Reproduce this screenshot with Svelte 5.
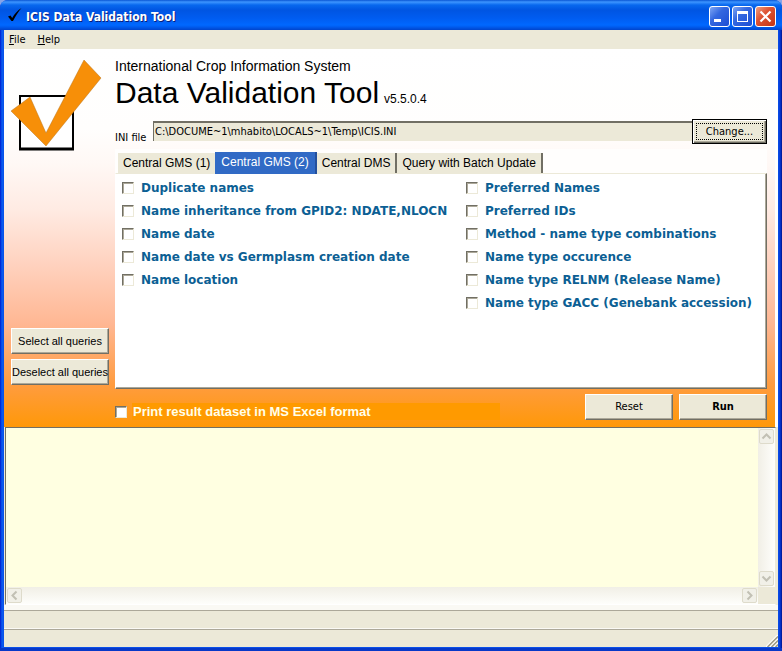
<script>
  const tabs = ['Central GMS (1)', 'Central GMS (2)', 'Central DMS', 'Query with Batch Update'];
  let active = $state(1);
  let iniPath = $state('C:\\DOCUME~1\\mhabito\\LOCALS~1\\Temp\\ICIS.INI');
  let excel = $state(false);
  let columns = $state(
    [
      [
        'Duplicate names',
        'Name inheritance from GPID2: NDATE,NLOCN',
        'Name date',
        'Name date vs Germplasm creation date',
        'Name location'
      ],
      [
        'Preferred Names',
        'Preferred IDs',
        'Method - name type combinations',
        'Name type occurence',
        'Name type RELNM (Release Name)',
        'Name type GACC (Genebank accession)'
      ]
    ].map((column) => column.map((label) => ({ label, checked: false })))
  );

  function setAll(value) {
    for (const column of columns) for (const query of column) query.checked = value;
  }
</script>

<div class="window">
  <header class="titlebar">
    <svg class="app-icon" viewBox="0 0 16 16" aria-hidden="true">
      <path d="M1 9.5 L3.5 8.5 L5.2 11 C7.5 7 10.5 3.5 14.5 1 C11 5 8.5 9 6 14 L4.5 14 Z" fill="#000" />
    </svg>
    <h1>ICIS Data Validation Tool</h1>
    <div class="controls">
      <button class="ctl" aria-label="Minimize">
        <svg viewBox="0 0 19 19"><path d="M4 12h7v3H4z" fill="#fff" /></svg>
      </button>
      <button class="ctl" aria-label="Maximize">
        <svg viewBox="0 0 19 19"><path d="M4 4h11v11H4zM5 7v7h9V7z" fill="#fff" fill-rule="evenodd" /></svg>
      </button>
      <button class="ctl close" aria-label="Close">
        <svg viewBox="0 0 19 19"><path d="M4.5 4.5l10 10M14.5 4.5l-10 10" stroke="#fff" stroke-width="2.2" /></svg>
      </button>
    </div>
  </header>

  <div class="client">
    <nav class="menu">
      <button><u>F</u>ile</button>
      <button><u>H</u>elp</button>
    </nav>

    <main>
      <aside>
        <svg class="logo" viewBox="0 0 92 92" aria-hidden="true">
          <rect x="9" y="37" width="53" height="53" fill="#fff" stroke="#000" stroke-width="2" />
          <path d="M8 90h55" stroke="#000" stroke-width="3" />
          <path d="M0 52 L19 38 L35 74 L73 1 L90 19 L35 87 Z" fill="#f78f08" stroke="#b8741c" stroke-width=".5" />
        </svg>
        <div class="side-buttons">
          <button class="btn" onclick={() => setAll(true)}>Select all queries</button>
          <button class="btn" onclick={() => setAll(false)}>Deselect all queries</button>
        </div>
      </aside>

      <section class="work">
        <p class="system">International Crop Information System</p>
        <div class="product">
          <h2>Data Validation Tool</h2>
          <span>v5.5.0.4</span>
        </div>

        <div class="ini">
          <label for="ini">INI file</label>
          <input id="ini" type="text" readonly bind:value={iniPath} />
          <button class="btn default">Change...</button>
        </div>

        <div class="tabs" role="tablist">
          {#each tabs as tab, i}
            <button role="tab" class:active={active === i} aria-selected={active === i} onclick={() => (active = i)}>{tab}</button>
          {/each}
        </div>

        <div class="panel" role="tabpanel">
          {#each columns as column}
            <div class="queries">
              {#each column as query}
                <label><input type="checkbox" bind:checked={query.checked} />{query.label}</label>
              {/each}
            </div>
          {/each}
        </div>

        <div class="actions">
          <label class="excel"><input type="checkbox" bind:checked={excel} />Print result dataset in MS Excel format</label>
          <button class="btn" onclick={() => setAll(false)}>Reset</button>
          <button class="btn run">Run</button>
        </div>
      </section>
    </main>

    <section class="output">
      <textarea readonly aria-label="Results"></textarea>
      <div class="bar vertical">
        <button aria-label="Scroll up"><svg viewBox="0 0 13 13"><path d="M2.5 8.5l4-4 4 4" /></svg></button>
        <button aria-label="Scroll down"><svg viewBox="0 0 13 13"><path d="M2.5 4.5l4 4 4-4" /></svg></button>
      </div>
      <div class="bar horizontal">
        <button aria-label="Scroll left"><svg viewBox="0 0 13 13"><path d="M8.5 2.5l-4 4 4 4" /></svg></button>
        <button aria-label="Scroll right"><svg viewBox="0 0 13 13"><path d="M4.5 2.5l4 4-4 4" /></svg></button>
      </div>
      <div class="corner"></div>
    </section>

    <footer>
      <div class="status"></div>
      <div class="status">
        <svg class="grip" viewBox="0 0 12 12" aria-hidden="true">
          <path d="M0 12L12 0M4 12L12 4M8 12L12 8" stroke="#fff" stroke-width="1.5" />
          <path d="M1.5 12L12 1.5M5.5 12L12 5.5M9.5 12L12 9.5" stroke="#9c9882" stroke-width="1.5" />
        </svg>
      </div>
    </footer>
  </div>
</div>

<style>
  :global(body) {
    background: #86a4e8;
  }
  .window {
    box-sizing: border-box;
    min-height: 100vh;
    display: flex;
    flex-direction: column;
    padding: 0 4px 4px;
    border-radius: 8px 8px 0 0;
    background: linear-gradient(90deg, #0019cf 0, #0a5cf0 2px, #0a50e8 4px, #0a50e8 calc(100% - 4px), #0538d8 calc(100% - 2px), #00138c 100%);
    box-shadow: inset 0 -4px 0 -1px #0838c8;
    font: 11px/14px 'DejaVu Sans Condensed', 'DejaVu Sans', sans-serif;
    color: #000;
  }
  button,
  input,
  textarea {
    font: inherit;
    color: inherit;
    margin: 0;
    box-sizing: border-box;
  }
  .titlebar {
    height: 30px;
    margin: 0 -4px;
    padding: 0 6px 0 7px;
    box-sizing: border-box;
    display: flex;
    align-items: center;
    border-radius: 8px 8px 0 0;
    background: linear-gradient(#0a56d4 0, #3d95ff 2px, #0868ee 5px, #0055e2 10px, #005cf0 18px, #0068ff 25px, #005bee 27px, #0044cc 30px);
  }
  .app-icon {
    width: 16px;
    height: 16px;
  }
  h1 {
    flex: 1;
    margin: 4px 0 0 3px;
    font: bold 12px/16px 'DejaVu Sans Condensed', 'DejaVu Sans', sans-serif;
    color: #fff;
    text-shadow: 1px 1px 0 #0a1f7a;
  }
  .controls {
    display: flex;
    gap: 2px;
    padding-top: 3px;
  }
  .ctl {
    width: 21px;
    height: 21px;
    padding: 0;
    border: 1px solid #fff;
    border-radius: 3px;
    background: linear-gradient(135deg, #7fa6f4 0, #3468e0 40%, #1c4ed4 100%);
  }
  .ctl.close {
    background: linear-gradient(135deg, #f0a080 0, #de5434 40%, #c43414 100%);
  }
  .ctl svg {
    display: block;
    width: 19px;
    height: 19px;
    fill: none;
  }
  .client {
    flex: 1;
    display: flex;
    flex-direction: column;
    background: #ece9d8;
  }
  .menu {
    display: flex;
    gap: 12px;
    height: 19px;
    padding: 0 5px;
    background: #ece9d8;
  }
  .menu button {
    border: 0;
    padding: 0;
    background: none;
  }
  main {
    display: grid;
    grid-template-columns: 98px 1fr;
    column-gap: 6px;
    padding: 8px 8px 7px 7px;
    margin-right: 3px;
    box-shadow: 3px 0 0 #fff;
    background: linear-gradient(#fff 0, #fffefd 80px, #fff8f5 115px, #ffebe3 160px, #ffd2bf 215px, #ffb793 275px, #ff9c40 335px, #ff9808 100%);
  }
  aside {
    display: flex;
    flex-direction: column;
    justify-content: space-between;
  }
  .logo {
    width: 92px;
    height: 92px;
    margin-top: 2px;
    overflow: visible;
  }
  .side-buttons {
    display: flex;
    flex-direction: column;
    gap: 5px;
    padding-bottom: 35px;
    font: 11px/14px 'Liberation Sans', Arial, sans-serif;
  }
  .btn {
    height: 26px;
    padding: 0;
    white-space: nowrap;
    background: #ece9d8;
    border: 1px solid;
    border-color: #fff #716f64 #716f64 #fff;
    box-shadow: inset -1px -1px 0 #aca899;
  }
  .btn.default {
    width: 75px;
    height: 25px;
    border-color: #000;
    outline: 1px dotted #000;
    outline-offset: -5px;
    box-shadow: inset 1px 1px 0 #fff, inset -1px -1px 0 #716f64, inset -2px -2px 0 #aca899;
  }
  .system {
    margin: 0;
    font: 14px/18px 'Liberation Sans', Arial, sans-serif;
  }
  .product {
    display: flex;
    align-items: baseline;
    gap: 5px;
  }
  .product h2 {
    margin: 0;
    font: 30px/36px 'Liberation Sans', Arial, sans-serif;
  }
  .product span {
    font: 12px/14px 'Liberation Sans', Arial, sans-serif;
  }
  .ini {
    display: flex;
    align-items: flex-start;
    margin-top: 8px;
  }
  .ini label {
    width: 38px;
    padding-top: 12px;
    white-space: nowrap;
  }
  .ini input {
    flex: 1;
    min-width: 0;
    height: 20px;
    margin-top: 2px;
    padding: 0 1px 2px;
    background: #ece9d8;
    border: 0 solid #716f64;
    border-width: 2px 0 0 1px;
  }
  .tabs {
    display: flex;
    height: 24px;
    box-sizing: border-box;
    margin-top: 4px;
    padding: 4px 0 0 3px;
    align-items: flex-start;
    background: #fffefd;
  }
  .tabs button {
    height: 20px;
    padding: 0 5px 1px;
    border: 0;
    border-right: 2px solid #716f64;
    background: #ece9d8;
    font: 12px/18px 'Liberation Sans', Arial, sans-serif;
    white-space: nowrap;
  }
  .tabs button:first-child {
    border-right: 0;
  }
  .tabs button.active {
    height: 22px;
    margin-top: -1px;
    padding: 0 6px 3px;
    background: #316ac5;
    color: #fff;
    border-color: #24509c;
  }
  .panel {
    display: grid;
    grid-template-columns: 344px 1fr;
    min-height: 216px;
    box-sizing: border-box;
    padding: 2px 6px;
    background: #fff;
    border: 1px solid;
    border-color: #ece9d8 #716f64 #716f64 #fff;
    box-shadow: inset -1px -1px 0 #aca899;
  }
  .queries label {
    display: flex;
    align-items: center;
    gap: 7px;
    height: 23px;
    font: bold 12px/16px 'DejaVu Sans', Verdana, sans-serif;
    color: #0c5f94;
    white-space: nowrap;
  }
  input[type='checkbox'] {
    appearance: none;
    width: 12px;
    height: 12px;
    background: #fff;
    border: 1px solid;
    border-color: #716f64 #ece9d8 #ece9d8 #716f64;
    box-shadow: inset 1px 1px 0 #aca899;
  }
  input[type='checkbox']:checked {
    background: radial-gradient(#000 40%, #fff 45%);
  }
  .actions {
    display: flex;
    align-items: flex-start;
    gap: 6px;
    margin-top: 5px;
  }
  .actions .btn {
    width: 88px;
  }
  .actions .run {
    font-weight: bold;
  }
  .excel {
    display: flex;
    align-items: center;
    gap: 6px;
    width: 385px;
    height: 17px;
    margin: 9px auto 0 0;
    background: linear-gradient(90deg, transparent 17px, #ff9a00 17px);
    font: bold 13px/16px 'Liberation Sans', Arial, sans-serif;
    color: #ffffe8;
  }
  .output {
    flex: 1;
    display: grid;
    grid-template: 1fr 17px / 1fr 17px;
    margin: 0 2px 0 1px;
    min-height: 178px;
    box-sizing: border-box;
    border: 1px solid;
    border-color: #716f64 #ece9d8 #fff #716f64;
    background: #ece9d8;
  }
  textarea {
    width: 100%;
    height: 100%;
    border: 0;
    padding: 2px;
    resize: none;
    background: #ffffe1;
    display: block;
  }
  .bar {
    display: flex;
    justify-content: space-between;
  }
  .vertical {
    flex-direction: column;
    background: linear-gradient(90deg, #f1efe6, #fefefb);
  }
  .horizontal {
    background: linear-gradient(#f1efe6, #fefefb);
  }
  .bar button {
    width: 15px;
    height: 15px;
    margin: 1px;
    padding: 0;
    border: 1px solid #dedbcb;
    border-radius: 2px;
    background: #f1f0e8;
  }
  .bar svg {
    display: block;
    width: 13px;
    height: 13px;
    fill: none;
    stroke: #c2c0b4;
    stroke-width: 2;
  }
  footer {
    display: flex;
    flex-direction: column;
    gap: 1px;
    padding-top: 5px;
    background: #faf9f4;
  }
  .status {
    display: flex;
    justify-content: flex-end;
    align-items: flex-end;
    height: 18px;
    box-sizing: border-box;
    border-top: 1px solid #aca899;
    background: #ece9d8;
  }
  .grip {
    width: 12px;
    height: 12px;
  }
</style>
